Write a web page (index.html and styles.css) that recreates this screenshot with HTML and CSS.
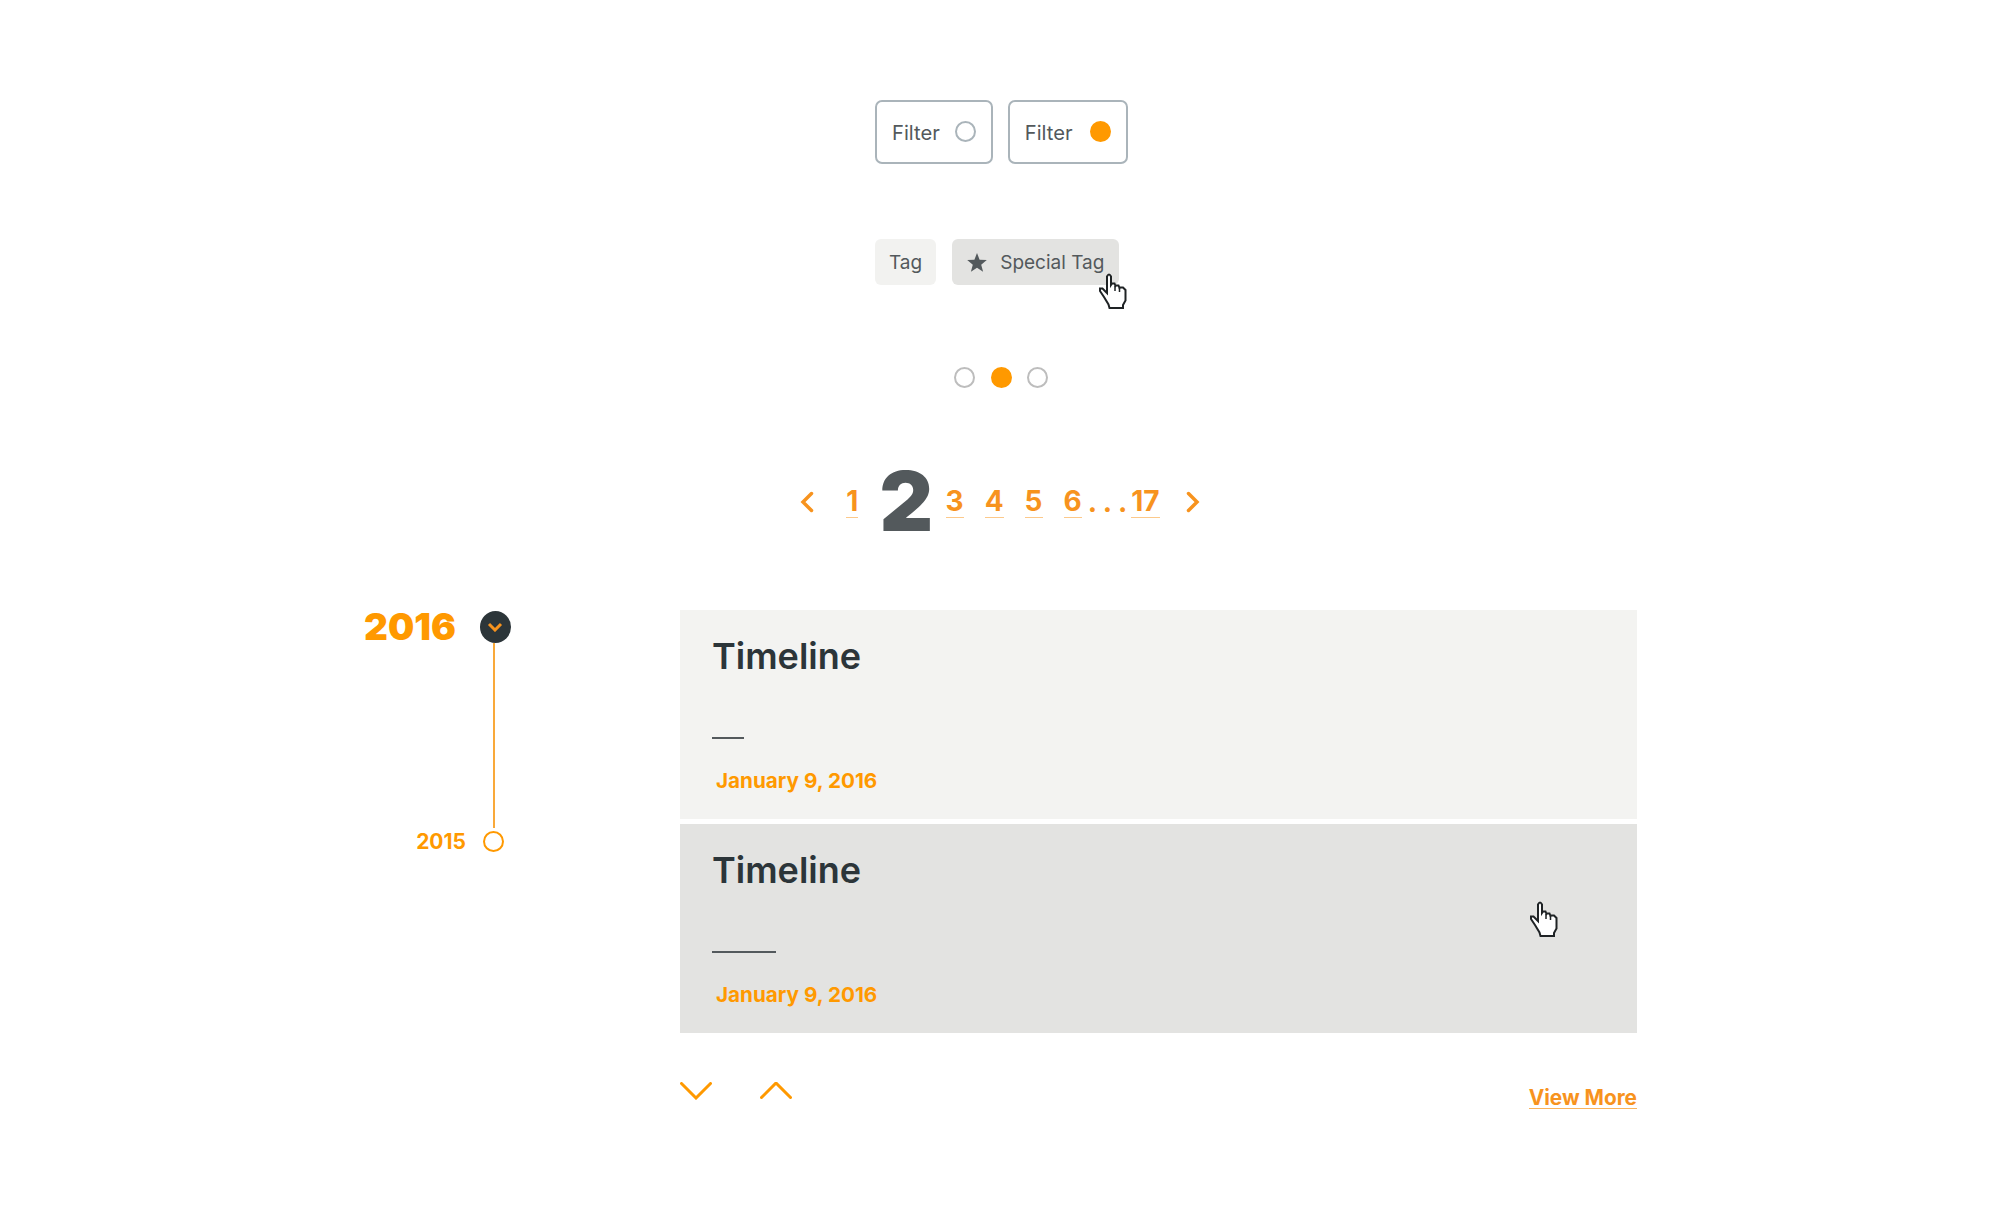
FILE: index.html
```html
<!DOCTYPE html>
<html lang="en">
<head>
<meta charset="utf-8">
<title>UI components</title>
<link rel="stylesheet" href="styles.css">
</head>
<body>
<main class="page">
  <div class="row filters">
    <button class="filter"><span>Filter</span><i class="radio"></i></button>
    <button class="filter filter-on"><span>Filter</span><i class="radio radio-on"></i></button>
  </div>
  <div class="row tags">
    <span class="tag">Tag</span>
    <span class="tag tag-special">
      <svg class="star" viewBox="0 0 20 19"><path d="M10 0l2.600 6.700 7.200.4-5.600 4.600 1.900 7L10 14.800l-6.100 3.900 1.900-7L.2 7.100l7.200-.4z"/></svg>
      Special Tag
      <svg class="hand hand-tag" viewBox="0 0 28 36"><use href="#hand"/></svg>
    </span>
  </div>
  <div class="dots"><i class="dot"></i><i class="dot dot-on"></i><i class="dot"></i></div>
  <nav class="pager">
    <svg class="pg-arrow" viewBox="0 0 14 22"><path d="M11.500 2.500L3 11l8.500 8.500"/></svg>
    <a class="pg pg-1">1</a>
    <b class="pg-current">2</b>
    <a class="pg">3</a><a class="pg">4</a><a class="pg">5</a><a class="pg pg-6">6</a>
    <span class="ellipsis">. . .</span>
    <a class="pg pg-17">17</a>
    <svg class="pg-arrow pg-next" viewBox="0 0 14 22"><path d="M2.500 2.500L11 11l-8.500 8.500"/></svg>
  </nav>
  <section class="timeline">
    <aside class="rail">
      <div class="year-now"><span>2016</span>
        <i class="knob"><svg viewBox="0 0 16 10"><path d="M2 2l6 6 6-6"/></svg></i>
      </div>
      <div class="rail-line"></div>
      <div class="year-past"><span>2015</span><i class="ring"></i></div>
    </aside>
    <div class="content">
      <article class="card">
        <h2>Timeline</h2>
        <hr class="rule">
        <p class="date">January 9, 2016</p>
      </article>
      <article class="card card-hover">
        <h2>Timeline</h2>
        <hr class="rule rule-long">
        <p class="date">January 9, 2016</p>
        <svg class="hand hand-card" viewBox="0 0 28 36"><use href="#hand"/></svg>
      </article>
      <div class="foot">
        <svg class="chev" viewBox="0 0 32 18"><path d="M1.500 1.500L16 16 30.500 1.500"/></svg>
        <svg class="chev" viewBox="0 0 32 18"><path d="M1.500 15.500L16 1l14.500 14.500"/></svg>
        <a class="more">View More</a>
      </div>
    </div>
  </section>
</main>
<svg class="defs" width="0" height="0">
  <symbol id="hand" viewBox="0 0 28 36">
    <path fill="#fff" stroke="#1f2325" stroke-width="2" stroke-linejoin="miter" d="M8 3.500Q10-.5 12 3.500V12L13 10.500H15.500L16.500 13 17 12.500H19.500L20.500 15 21 14.500H24L26.500 17V27.500L24 32V35H10.500L9.500 31.500 5 24 1 18V15.500H3.500L8 20Z"/>
    <path fill="none" stroke="#1f2325" stroke-width="1.500" d="M16 13v5M20.500 15v4"/>
  </symbol>
</svg>
</body>
</html>
```

FILE: styles.css
```css
* { box-sizing: border-box; }
html, body { margin: 0; background: #fff; }
body { font-family: Inter, "Noto Sans", "Liberation Sans", sans-serif; color: #53595c; }
.page { width: 2000px; height: 1209px; padding-top: 100px; overflow: hidden; }
.row { display: flex; margin-left: 875px; }
.filters { gap: 15px; }
.filter {
  display: flex; align-items: center; height: 64px; padding: 0 15px 0 15px;
  background: #fff; border: 2px solid #aab4ba; border-radius: 7px;
  font: 400 20.2px Inter, sans-serif; color: #53595c;
}
.filter span { margin-top: 1px; }
.radio { width: 21px; height: 21px; margin: -2px 0 0 15px; border: 2px solid #aab4ba; border-radius: 50%; }
.filter-on .radio { margin-left: 17px; }
.radio-on { background: #ff9900; border-color: #ff9900; }
.tags { gap: 16px; margin-top: 75px; }
.tag {
  position: relative; display: flex; align-items: center; height: 46px; padding: 0 14px;
  background: #f2f2f0; border-radius: 6px; font-size: 19px;
}
.tag-special { padding-right: 15px; background: #e3e3e1; }
.star { width: 20px; height: 19px; margin: 0 13px 0 1px; fill: #53595c; }
.hand { position: absolute; width: 28px; height: 36px; }
.hand-tag { left: 147px; top: 34px; }
.hand-card { left: 850px; top: 77px; }
.dots { display: flex; justify-content: center; gap: 15.5px; margin: 82px 0 0 2px; }
.dot { width: 21px; height: 21px; border: 2px solid #bdbdbd; border-radius: 50%; }
.dot-on { background: #ff9900; border-color: #ff9900; }
.pager { display: flex; align-items: center; justify-content: center; height: 70px; margin-top: 79px; }
.pg {
  padding-bottom: 1px; border-bottom: 1px solid #fcc98b; color: #f7931e;
  font-size: 28px; font-weight: 700; line-height: 30px; margin-right: 21px;
}
.pg-arrow { width: 14px; height: 22px; fill: none; stroke: #f7931e; stroke-width: 3.500; stroke-linecap: round; }
.pg-1 { margin-left: 32px; margin-right: 0; }
.pg-current { margin: -2px 12.5px 0 21px; color: #53595c; font-size: 83px; font-weight: 900; line-height: 70px; }
.pg-6 { margin-right: 6px; }
.ellipsis { margin-right: 4px; color: #f7931e; font-size: 28px; font-weight: 700; }
.pg-17 { margin-right: 0; }
.pg-next { margin-left: 26px; }
.timeline { display: flex; margin-top: 73px; padding-left: 364px; }
.rail { width: 316px; flex: none; }
.year-now { display: flex; align-items: center; gap: 24px; width: 147px; }
.year-now span { color: #ff9900; font-size: 37px; font-weight: 900; line-height: 32px; }
.knob { display: flex; align-items: center; justify-content: center; width: 32px; height: 32px; margin-top: 1px; border-radius: 50%; background: #2c3539; }
.knob svg { width: 16px; height: 10px; fill: none; stroke: #f7931e; stroke-width: 3; }
.rail-line { width: 2px; height: 185px; margin-left: 129px; background: #f9a93a; }
.year-past { display: flex; align-items: center; justify-content: flex-end; gap: 17px; width: 140px; }
.year-past span { margin-top: 1px; color: #ff9900; font-size: 21px; font-weight: 700; }
.ring { width: 21px; height: 21px; border: 2px solid #ff9900; border-radius: 50%; }
.content { position: relative; width: 957px; }
.card { position: relative; height: 209px; margin-bottom: 5px; padding: 24px 32px 0; background: #f3f3f1; }
.card-hover { background: #e3e3e1; }
h2 { margin: 0; color: #2c3539; font-size: 36px; font-weight: 600; line-height: 44px; }
.rule { width: 32px; height: 2px; margin: 59px 0 0; border: 0; background: #53595c; }
.rule-long { width: 64px; }
.date { margin: 27px 0 0 4px; color: #ff9900; font-size: 20.7px; font-weight: 700; line-height: 30px; }
.foot { display: flex; align-items: flex-start; gap: 48px; margin-top: 49px; }
.chev { width: 32px; height: 18px; fill: none; stroke: #ff9900; stroke-width: 3; stroke-linecap: round; }
.more { margin: 6px 0 0 auto; border-bottom: 1px solid #f9b35c; color: #f7931e; font-size: 20.8px; font-weight: 700; line-height: 20px; }
.defs { position: absolute; }
```
